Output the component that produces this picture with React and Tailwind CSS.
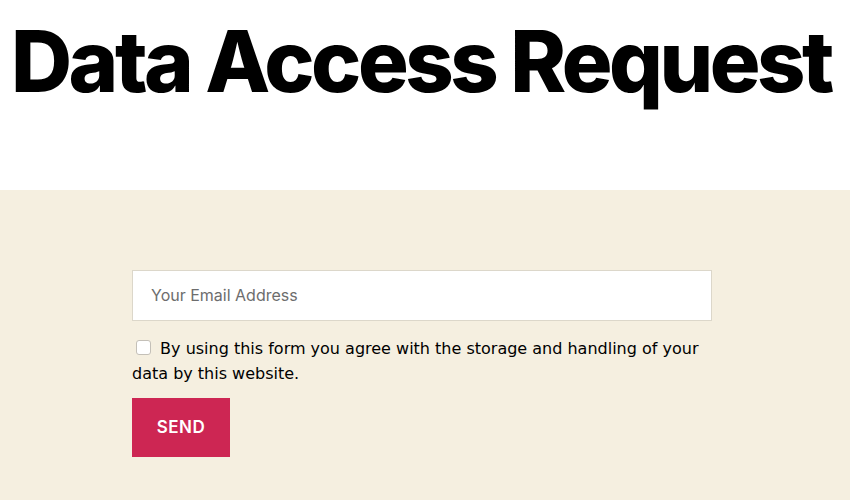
export default function App() {
  return (
    <div className="min-h-screen bg-white">
      <header className="h-[190px] bg-white pt-[11px]">
        <h1 className="ml-[11px] font-['Inter',sans-serif] text-[84.6px] font-extrabold leading-[1.2] tracking-[-0.0415em] text-black whitespace-nowrap">
          Data Access Request
        </h1>
      </header>
      <section className="h-[310px] bg-[#f5efe0] pt-[80px]">
        <form className="ml-[132px] w-[580px]" onSubmit={(e) => e.preventDefault()}>
          <input
            type="email"
            placeholder="Your Email Address"
            className="block h-[51px] w-full border border-[#dcd7ca] bg-white px-[18px] pb-[2px] font-['Inter',sans-serif] text-[16px] text-black placeholder:text-[#6d6d6d] outline-none"
          />
          <label className="mt-[15px] block font-['DejaVu_Sans',sans-serif] text-[16px] leading-[25px] text-black">
            <input
              type="checkbox"
              className="ml-[4px] mr-[4px] inline-block h-[15px] w-[15px] appearance-none rounded-[3px] border border-[#c4c0b8] bg-white align-[-1px] checked:bg-[#cd2653]"
            />
            {' '}By using this form you agree with the storage and handling of your data by this website.
          </label>
          <button
            type="submit"
            className="mt-[12px] h-[59px] w-[98px] bg-[#cd2653] font-['Inter',sans-serif] text-[17px] font-semibold tracking-[0.03em] text-white"
          >
            SEND
          </button>
        </form>
      </section>
    </div>
  );
}
